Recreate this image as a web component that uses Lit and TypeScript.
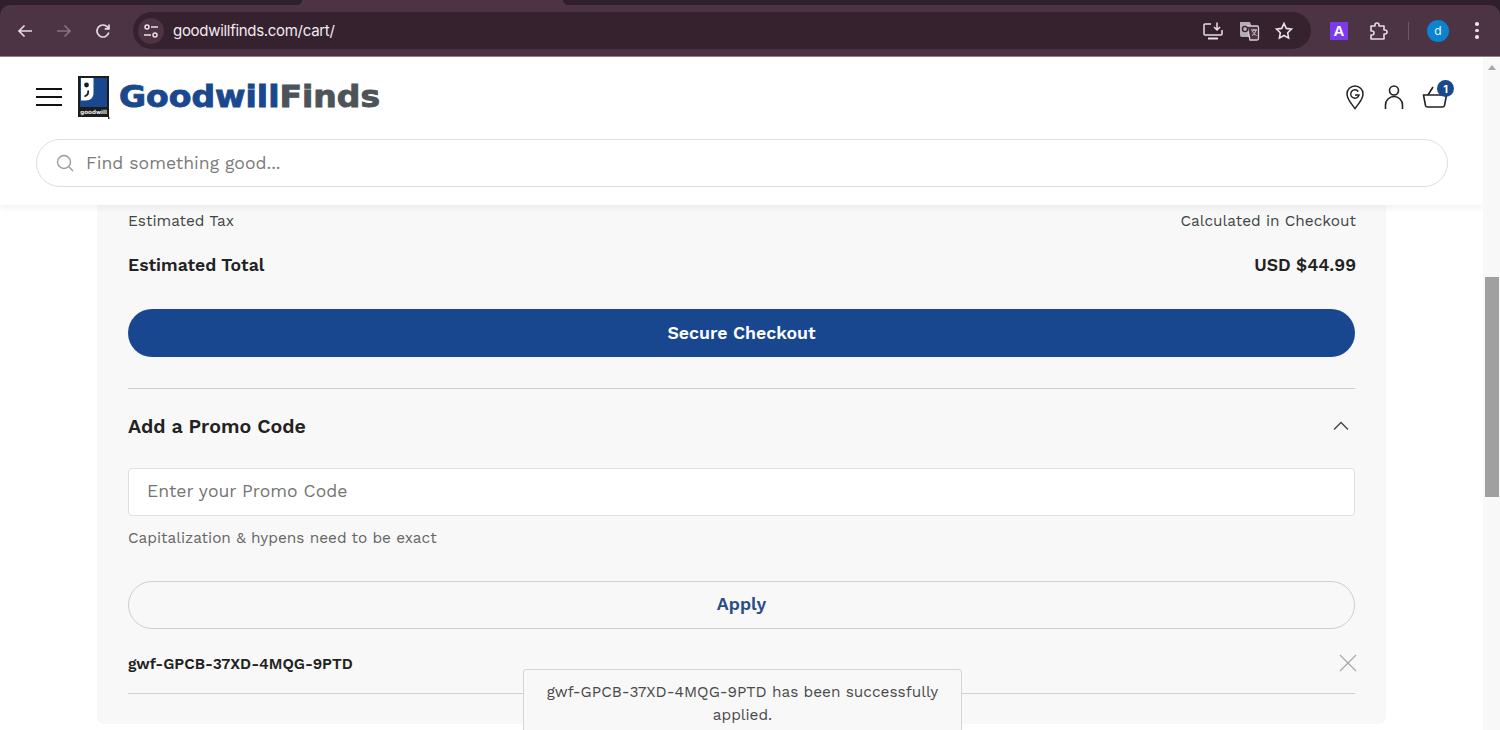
import { LitElement, html, css } from "lit";
import { customElement } from "lit/decorators.js";

@customElement("app-root")
export class AppRoot extends LitElement {
  static styles = css`
    :host { display: block; width: 1500px; height: 730px; overflow: hidden; position: relative; background: #fff; font-family: "Work Sans", "Inter", "Liberation Sans", sans-serif; color: #333; }
    * { box-sizing: border-box; }
    .chrome { height: 57px; background: #2f1e2c; display: flex; flex-direction: column; border-bottom: 1px solid #8d8189; }
    .tabs { height: 5px; display: flex; background: #4c3445; flex: none; }
    .tab-dark { background: #2f1e2c; }
    .tab-a { width: 302px; height: 5px; border-radius: 0 0 8px 0; }
    .tab-gap { width: 261px; }
    .tab-b { flex: 1; height: 5px; border-radius: 0 0 0 8px; }
    .toolbar { flex: 1; display: flex; align-items: center; padding-left: 16px; background: #4c3445; border-radius: 10px 10px 0 0; }
    .nav { display: flex; gap: 0; align-items: center; }
    .nav svg { display: block; }
    .nav .b { width: 39px; }
    .nav .b.last { width: 31px; }
    .omni { width: 1178px; height: 37px; margin-left: 8px; background: #36212f; border-radius: 19px; display: flex; align-items: center; padding: 0 17px 0 5px; }
    .site { width: 26px; height: 26px; border-radius: 50%; background: #4c3445; display: flex; align-items: center; justify-content: center; }
    .url { margin-left: 9px; font: 15px "Inter", "Liberation Sans", sans-serif; color: #f1ecef; letter-spacing: -0.3px; flex: 1; }
    .omni-icons { display: flex; gap: 14px; align-items: center; }
    .ext { display: flex; align-items: center; margin-left: 19px; }
    .aicon { width: 18px; height: 18px; background: #7c3aed; color: #fff; font: 700 15px "Liberation Sans", sans-serif; display: flex; align-items: center; justify-content: center; }
    .puzzle { margin-left: 20px; }
    .sep { width: 1px; height: 18px; background: #6d5a67; margin: 0 18px 0 20px; }
    .avatar { width: 22px; height: 22px; border-radius: 50%; background: #0a84d0; color: #e8f4fc; font: 12px "Inter", sans-serif; display: flex; align-items: center; justify-content: center; }
    .dots { margin-left: 26px; display: flex; flex-direction: column; gap: 3px; }
    .dots i { width: 3.5px; height: 3.5px; border-radius: 50%; background: #e8e0e5; display: block; }

    .viewport { height: 673px; display: flex; }
    .page { width: 1483px; height: 100%; position: relative; overflow: hidden; }
    .header { position: relative; z-index: 2; height: 148px; background: #fff; box-shadow: 0 2px 8px rgba(0,0,0,.07); padding: 19px 36px 0; }
    .brandrow { display: flex; align-items: center; height: 42px; }
    .burger { width: 26px; display: flex; flex-direction: column; gap: 6px; margin-right: 16px; }
    .burger i { height: 2px; background: #111; display: block; }
    .wordmark { margin-left: 9px; font: 700 30px "DejaVu Sans", "Liberation Sans", sans-serif; color: #19488f; line-height: 1; margin-top: 0; transform: scaleX(1.1); transform-origin: left center; -webkit-text-stroke: 0.9px currentColor; }
    .wordmark span { color: #4d5459; }
    .hicons { margin-left: auto; margin-right: -1px; display: flex; align-items: center; }
    .person { margin-left: 19px; }
    .search { margin-top: 21px; width: 1412px; height: 48px; border: 1px solid #dedede; border-radius: 24px; display: flex; align-items: center; padding-left: 19px; }
    .search span { margin-left: 12px; font-size: 17.6px; color: #7b7b7b; }
    .cart-wrap { position: relative; margin-left: 18px; }
    .cart-wrap svg { display: block; }
    .badge { position: absolute; top: -5px; left: 15px; width: 17px; height: 17px; border-radius: 50%; background: #19488f; color: #fff; font: 700 11px "Inter", sans-serif; display: flex; align-items: center; justify-content: center; }

    .card { width: 1289px; margin-left: 97px; height: 519px; background: #f8f8f8; border-radius: 0 0 7px 7px; padding: 0 31px; display: flex; flex-direction: column; }
    .row { display: flex; justify-content: space-between; align-items: center; flex: none; }
    .tax { height: 30px; padding-top: 1px; margin-right: -1px; font-size: 15.4px; color: #3f4644; }
    .total { height: 30px; margin-top: 15px; margin-right: -1px; font-size: 17.6px; font-weight: 600; color: #222; }
    .checkout { margin-top: 29px; height: 48px; border-radius: 24px; background: #19478f; color: #fff; font-size: 17.7px; font-weight: 600; display: flex; align-items: center; justify-content: center; flex: none; }
    .div1 { margin-top: 31px; height: 1px; background: #cfcfcf; flex: none; }
    .promo-h { height: 74px; font-size: 19.6px; font-weight: 600; color: #222; }
    .chev { margin-right: 6px; }
    .input { height: 48px; margin-top: 5px; background: #fff; border: 1px solid #e0e0e0; border-radius: 4px; display: flex; align-items: center; padding: 0 0 2px 18px; font-size: 17.6px; color: #757575; flex: none; }
    .hint { margin-top: 12px; height: 20px; font-size: 15.4px; line-height: 20px; color: #666; flex: none; }
    .apply { margin-top: 33px; height: 48px; border: 1px solid #cfcfcf; border-radius: 24px; padding-bottom: 3px; color: #2a4c88; font-size: 17.8px; font-weight: 600; display: flex; align-items: center; justify-content: center; flex: none; }
    .code { height: 64px; padding-top: 6px; font-size: 15.35px; font-weight: 600; color: #222; }
    .code svg { margin: -2px -2px 0 0; }
    .div2 { height: 1px; background: #cfcfcf; flex: none; }
    .toast { position: absolute; left: 523px; top: 612px; width: 439px; height: 80px; background: #f8f8f8; border: 1px solid #d4d4d4; border-radius: 3px 3px 0 0; padding: 11px 16px; text-align: center; font-size: 15.4px; line-height: 23px; color: #4a4a4a; z-index: 1; }
    .scroll { width: 17px; background: #f8f8f8; position: relative; padding: 220px 1px 0 2px; }
    .thumb { width: 14px; height: 220px; background: #a0a0a0; }
    .arrow { position: absolute; top: 8px; left: 5px; width: 0; height: 0; border-left: 4px solid transparent; border-right: 4px solid transparent; border-bottom: 5px solid #a8a8a8; }
  `;

  render() {
    return html`
      <div class="chrome">
        <div class="tabs">
          <div class="tab-dark tab-a"></div>
          <div class="tab-gap"></div>
          <div class="tab-dark tab-b"></div>
        </div>
        <div class="toolbar">
          <div class="nav">
            <div class="b"><svg width="18" height="18" viewBox="0 0 18 18" fill="none" stroke="#e4dbe1" stroke-width="1.7"><path d="M16 9H3M8.500 3.500 3 9l5.500 5.500"/></svg></div>
            <div class="b"><svg width="18" height="18" viewBox="0 0 18 18" fill="none" stroke="#85727f" stroke-width="1.7"><path d="M2 9h13M9.500 3.500 15 9l-5.500 5.500"/></svg></div>
            <div class="b last"><svg width="18" height="18" viewBox="0 0 18 18" fill="none" stroke="#e4dbe1" stroke-width="1.7"><path d="M14.800 10.500A6 6 0 1 1 13.300 4.800L15 6.500"/><path d="M15 2.500v4.300h-4.300" /></svg></div>
          </div>
          <div class="omni">
            <div class="site"><svg width="18" height="18" viewBox="0 0 18 18" fill="none" stroke="#e8e0e5" stroke-width="1.5"><circle cx="5" cy="5" r="2"/><path d="M9 5h7M2 13h7"/><circle cx="13" cy="13" r="2"/></svg></div>
            <div class="url">goodwillfinds.com/cart/</div>
            <div class="omni-icons">
              <svg width="22" height="20" viewBox="0 0 22 20" fill="none" stroke="#e8e0e5" stroke-width="1.5"><path d="M9 3H3a1 1 0 0 0-1 1v9a1 1 0 0 0 1 1h16a1 1 0 0 0 1-1V9"/><path d="M6 17.500h10" stroke-width="2"/><path d="M15 1.500v7M12 6l3 3 3-3"/></svg>
              <svg width="22" height="21" viewBox="0 0 22 21"><path d="M2 2h10l5 15H4a2 2 0 0 1-2-2z" fill="#b9adb5"/><path d="M9 6h10a1.500 1.500 0 0 1 1.500 1.500v11A1.500 1.500 0 0 1 19 20h-7z" fill="#4c3445" stroke="#d9d0d6" stroke-width="1.3"/><circle cx="7" cy="9" r="2.600" fill="none" stroke="#36212f" stroke-width="1.4"/><path d="M13 10h6M16 9v2M18 10c-.5 2.500-2 4.500-4 5.500M14.500 11c.7 2 2 3.500 4 4.500" stroke="#d9d0d6" stroke-width="1" fill="none"/></svg>
              <svg width="20" height="20" viewBox="0 0 20 20" fill="none" stroke="#e8e0e5" stroke-width="1.6"><path d="m10 2.500 2.300 4.900 5.200.7-3.800 3.700.9 5.300-4.600-2.600-4.600 2.600.9-5.300L2.500 8.100l5.200-.7z"/></svg>
            </div>
          </div>
          <div class="ext">
            <div class="aicon">A</div>
            <svg class="puzzle" width="20" height="20" viewBox="0 0 20 20" fill="none" stroke="#e4dbe1" stroke-width="1.6"><path d="M3 5h4V4a2 2 0 0 1 4 0v1h5v4h1a2 2 0 0 1 0 4h-1v5H3v-4h1a2 2 0 0 0 0-4H3z" stroke-linejoin="round"/></svg>
            <div class="sep"></div>
            <div class="avatar">d</div>
            <div class="dots"><i></i><i></i><i></i></div>
          </div>
        </div>
      </div>
      <div class="viewport">
        <div class="page">
          <div class="header">
            <div class="brandrow">
              <div class="burger"><i></i><i></i><i></i></div>
              <svg width="32" height="43" viewBox="0 0 32 43">
                <rect x="0" y="0" width="31" height="41" fill="#1c1c1c"/>
                <rect x="2" y="2" width="27" height="29" fill="#19488f"/>
                <path d="M3 2h12.500v15c0 4.500-3 7.500-7.500 7.500H3z" fill="#fff"/>
                <circle cx="8.500" cy="9" r="2.400" fill="#1c1c1c"/>
                <path d="M10 14.500c.8 2.500-.6 4.800-3.500 6" stroke="#1c1c1c" stroke-width="1.800" fill="none"/>
                <text x="15.500" y="37.800" text-anchor="middle" font-family="DejaVu Sans" font-weight="700" font-size="5.600" fill="#eee">goodwill</text>
                <rect x="30" y="41" width="1.500" height="2" fill="#333"/>
              </svg>
              <div class="wordmark">Goodwill<span>Finds</span></div>
              <div class="hicons">
                <svg width="20" height="26" viewBox="0 0 20 26" fill="none" stroke="#222" stroke-width="1.500"><path d="M10 24.500C6 19 2 15.500 2 10a8 8 0 0 1 16 0c0 5.500-4 9-8 14.500z"/><path d="M13.300 7.500A4.200 4.200 0 1 0 14 11h-4" stroke-width="1.400"/></svg>
                <svg class="person" width="20" height="26" viewBox="0 0 20 26" fill="none" stroke="#222" stroke-width="1.600"><circle cx="10" cy="6.500" r="4.500"/><path d="M1.500 25v-4a8.500 8.500 0 0 1 17 0v4"/></svg>
                <div class="cart-wrap">
                  <svg width="26" height="24" viewBox="0 0 26 24" fill="none" stroke="#222" stroke-width="1.600"><path d="M1.500 10h23l-2 10.500a2 2 0 0 1-2 1.500H5.500a2 2 0 0 1-2-1.500z" stroke-linejoin="round"/><path d="M6 10l5-8"/></svg>
                  <div class="badge">1</div>
                </div>
              </div>
            </div>
            <div class="search">
              <svg width="18" height="18" viewBox="0 0 18 18" fill="none" stroke="#9a9a9a" stroke-width="1.400"><circle cx="8" cy="8" r="6.500"/><path d="m13 13 4 4"/></svg>
              <span>Find something good...</span>
            </div>
          </div>
          <div class="card">
            <div class="row tax"><span>Estimated Tax</span><span>Calculated in Checkout</span></div>
            <div class="row total"><span>Estimated Total</span><span>USD $44.99</span></div>
            <div class="checkout">Secure Checkout</div>
            <div class="div1"></div>
            <div class="row promo-h"><span>Add a Promo Code</span>
              <svg class="chev" width="16" height="10" viewBox="0 0 16 10" fill="none" stroke="#444" stroke-width="1.400"><path d="m1 8.500 7-7 7 7"/></svg></div>
            <div class="input">Enter your Promo Code</div>
            <div class="hint">Capitalization &amp; hypens need to be exact</div>
            <div class="apply">Apply</div>
            <div class="row code"><span>gwf-GPCB-37XD-4MQG-9PTD</span>
              <svg width="18" height="18" viewBox="0 0 18 18" fill="none" stroke="#aaa" stroke-width="1.300"><path d="m1 1 16 16M17 1 1 17"/></svg></div>
            <div class="div2"></div>
          </div>
          <div class="toast">gwf-GPCB-37XD-4MQG-9PTD has been successfully applied.</div>
        </div>
        <div class="scroll"><div class="arrow"></div><div class="thumb"></div></div>
      </div>
    `;
  }
}
